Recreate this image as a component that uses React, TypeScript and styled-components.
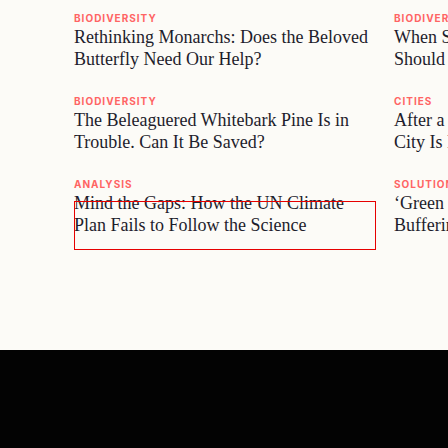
import React from "react";
import styled, { createGlobalStyle } from "styled-components";

const GlobalStyle = createGlobalStyle`
  html, body {
    margin: 0;
    padding: 0;
    background: #fcfbf7;
    overflow: hidden;
  }
  * { box-sizing: border-box; }
`;

const Page = styled.div`
  width: 448px;
  min-height: 448px;
  display: flex;
  flex-direction: column;
  overflow: hidden;
  background: #fcfbf7;
`;

const Main = styled.main`
  height: 350px;
  padding: 12px 0 0 74px;
  display: grid;
  grid-template-columns: repeat(2, 300px);
  column-gap: 20px;
  align-content: start;
`;

const Column = styled.div`
  display: flex;
  flex-direction: column;
  gap: 25px;
`;

const Item = styled.article`
  display: flex;
  flex-direction: column;
  gap: 2px;
`;

const Category = styled.span`
  display: block;
  font-family: Inter, "Liberation Sans", Arial, sans-serif;
  font-weight: 700;
  font-size: 10px;
  line-height: 12px;
  letter-spacing: 1px;
  text-transform: uppercase;
  color: #ff6464;
  white-space: nowrap;
`;

const Title = styled.a<{ $focused?: boolean }>`
  position: relative;
  display: block;
  font-family: "Liberation Serif", "Times New Roman", serif;
  font-size: 18px;
  line-height: 22px;
  color: #1e1d2c;
  text-decoration: none;
  ${(p) =>
    p.$focused &&
    `
    &::after {
      content: "";
      position: absolute;
      left: 0;
      top: 9px;
      width: 300px;
      height: 47px;
      border: 1px solid #e60000;
      pointer-events: none;
    }
  `}
`;

const Footer = styled.footer`
  flex: 1;
  min-height: 98px;
  background: #030303;
`;

type Story = { category: string; title: string; focused?: boolean };

const columns: Story[][] = [
  [
    {
      category: "Biodiversity",
      title: "Rethinking Monarchs: Does the Beloved Butterfly Need Our Help?",
    },
    {
      category: "Biodiversity",
      title: "The Beleaguered Whitebark Pine Is in Trouble. Can It Be Saved?",
    },
    {
      category: "Analysis",
      title: "Mind the Gaps: How the UN Climate Plan Fails to Follow the Science",
      focused: true,
    },
  ],
  [
    {
      category: "Biodiversity",
      title: "When Species Are Saved by Humans, Should They Still Count as Wild?",
    },
    {
      category: "Cities",
      title: "After a Decade of Floods, One Coastal City Is Rethinking Its Shoreline",
    },
    {
      category: "Solutions",
      title: "\u2018Green Infrastructure\u2019 Is Now Quietly Buffering Cities Against Floods",
    },
  ],
];

export default function App() {
  return (
    <>
      <GlobalStyle />
      <Page>
        <Main>
          {columns.map((col, ci) => (
            <Column key={ci}>
              {col.map((s, i) => (
                <Item key={i}>
                  <Category>{s.category}</Category>
                  <Title href="#" $focused={s.focused}>
                    {s.title}
                  </Title>
                </Item>
              ))}
            </Column>
          ))}
        </Main>
        <Footer />
      </Page>
    </>
  );
}
